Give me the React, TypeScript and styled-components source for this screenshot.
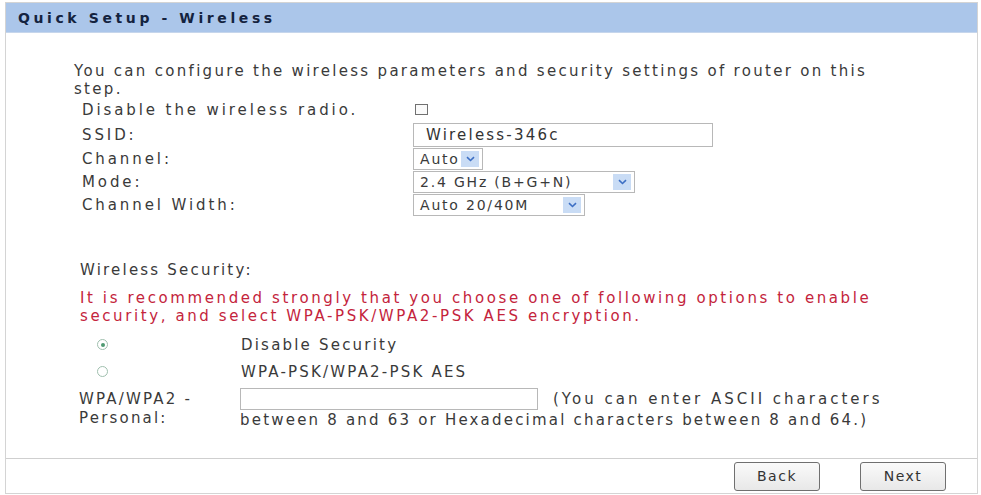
import { FC } from 'react'
import styled, { createGlobalStyle } from 'styled-components'

const GlobalStyle = createGlobalStyle`
  html, body {
    margin: 0;
    padding: 0;
    background: #fff;
  }
  body {
    font-family: "DejaVu Sans", Verdana, sans-serif;
    color: #3a3a3a;
  }
`

const Chevron: FC = () => (
  <svg width="9" height="6" viewBox="0 0 9 6">
    <path d="M1 1.2 L4.5 4.5 L8 1.2" fill="none" stroke="#3d6fc4" strokeWidth="1.6" />
  </svg>
)

const Select: FC<{ value: string; width: number }> = ({ value, width }) => (
  <StSelect style={{ width }}>
    <StSelectText>{value}</StSelectText>
    <StArrow>
      <Chevron />
    </StArrow>
  </StSelect>
)

const App: FC = () => {
  return (
    <>
      <GlobalStyle />
      <StFrame>
        <StHeader>Quick Setup - Wireless</StHeader>
        <StBody>
          <StIntro>
            You can configure the wireless parameters and security settings of router on this
            <br />
            step.
          </StIntro>
          <StForm>
            <StLabel $h={25}>Disable the wireless radio.</StLabel>
            <StCell $h={25}>
              <StCheckbox />
            </StCell>
            <StLabel $h={25}>SSID:</StLabel>
            <StCell $h={25}>
              <StInput $w={300}>Wireless-346c</StInput>
            </StCell>
            <StLabel $h={23}>Channel:</StLabel>
            <StCell $h={23}>
              <Select value="Auto" width={70} />
            </StCell>
            <StLabel $h={23}>Mode:</StLabel>
            <StCell $h={23}>
              <Select value="2.4 GHz (B+G+N)" width={222} />
            </StCell>
            <StLabel $h={23}>Channel Width:</StLabel>
            <StCell $h={23}>
              <Select value="Auto 20/40M" width={172} />
            </StCell>
          </StForm>

          <StSecurityTitle>Wireless Security:</StSecurityTitle>
          <StWarning>
            It is recommended strongly that you choose one of following options to enable
            <br />
            security, and select WPA-PSK/WPA2-PSK AES encryption.
          </StWarning>

          <StRadioList>
            <StRadioRow>
              <StRadioCell>
                <StRadio $checked />
              </StRadioCell>
              <span>Disable Security</span>
            </StRadioRow>
            <StRadioRow>
              <StRadioCell>
                <StRadio />
              </StRadioCell>
              <span>WPA-PSK/WPA2-PSK AES</span>
            </StRadioRow>
          </StRadioList>

          <StKeyRow>
            <StKeyLabel>
              WPA/WPA2 -<br />
              Personal:
            </StKeyLabel>
            <StKeyText>
              <StKeyLine>
                <StKeyInput />
                <StHint>(You can enter ASCII characters</StHint>
              </StKeyLine>
              <StKeyMore>between 8 and 63 or Hexadecimal characters between 8 and 64.)</StKeyMore>
            </StKeyText>
          </StKeyRow>
        </StBody>
        <StFooter>
          <StButton>Back</StButton>
          <StButton>Next</StButton>
        </StFooter>
      </StFrame>
    </>
  )
}

export default App

const StFrame = styled.div`
  margin: 2px 3px 0 5px;
  height: 492px;
  box-sizing: border-box;
  border: 1px solid #d4d4d4;
  display: flex;
  flex-direction: column;
`

const StHeader = styled.div`
  height: 29px;
  background: #abc6ea;
  border-bottom: 1px solid #c6d6ec;
  padding-left: 12px;
  display: flex;
  align-items: center;
  font-weight: bold;
  font-size: 14px;
  letter-spacing: 3.6px;
  color: #14233f;
`

const StBody = styled.div`
  flex: 1;
  padding: 29px 0 0 68px;
  font-size: 15px;
  letter-spacing: 2.2px;
`

const StIntro = styled.div`
  line-height: 18px;
  white-space: nowrap;
  letter-spacing: 2.3px;
  margin-bottom: -1px;
`

const StForm = styled.div`
  display: grid;
  grid-template-columns: 331px 1fr;
  margin-left: 8px;
`

const StLabel = styled.div<{ $h: number }>`
  height: ${(p) => p.$h}px;
  display: flex;
  align-items: center;
  white-space: nowrap;
  letter-spacing: 2.9px;
`

const StCell = styled.div<{ $h: number }>`
  height: ${(p) => p.$h}px;
  display: flex;
  align-items: center;
`

const StCheckbox = styled.span`
  display: block;
  width: 11px;
  height: 9px;
  margin-left: 2px;
  border: 1px solid #707070;
  background: #fafafa;
`

const StInput = styled.div<{ $w: number }>`
  width: ${(p) => p.$w}px;
  height: 24px;
  box-sizing: border-box;
  border: 1px solid #b8b8b8;
  padding-left: 12px;
  display: flex;
  align-items: center;
  color: #333;
`

const StSelect = styled.div`
  height: 22px;
  box-sizing: border-box;
  border: 1px solid #b8b8b8;
  display: flex;
  align-items: center;
  justify-content: space-between;
  padding: 0 3px 0 6px;
  font-size: 14px;
  letter-spacing: 1.8px;
`

const StSelectText = styled.span`
  white-space: nowrap;
`

const StArrow = styled.span`
  width: 18px;
  height: 16px;
  background: #c9dcf5;
  display: flex;
  align-items: center;
  justify-content: center;
`

const StSecurityTitle = styled.div`
  margin: 45px 0 0 6px;
  line-height: 18px;
`

const StWarning = styled.div`
  margin-top: 10px;
  margin-left: 6px;
  line-height: 18px;
  white-space: nowrap;
  letter-spacing: 2.6px;
  color: #c4243c;
`

const StRadioList = styled.div`
  margin-top: 6px;
`

const StRadioRow = styled.div`
  display: flex;
  align-items: center;
  height: 27px;
`

const StRadioCell = styled.div`
  width: 167px;
  padding-left: 23px;
  box-sizing: border-box;
`

const StRadio = styled.span<{ $checked?: boolean }>`
  display: block;
  width: 9px;
  height: 9px;
  border-radius: 50%;
  border: 1px solid #9fbfae;
  position: relative;
  &::after {
    content: '';
    display: ${(p) => (p.$checked ? 'block' : 'none')};
    position: absolute;
    left: 2.5px;
    top: 2.5px;
    width: 4px;
    height: 4px;
    border-radius: 50%;
    background: #4f9a72;
  }
`

const StKeyRow = styled.div`
  display: flex;
  margin-top: 3px;
  margin-left: 5px;
  line-height: 19px;
`

const StKeyLabel = styled.div`
  width: 161px;
  padding-top: 2px;
  white-space: nowrap;
`

const StKeyText = styled.div`
  white-space: nowrap;
`

const StKeyLine = styled.div`
  display: flex;
  align-items: center;
  gap: 15px;
  height: 22px;
`

const StKeyInput = styled.span`
  display: block;
  width: 298px;
  height: 22px;
  box-sizing: border-box;
  border: 1px solid #b8b8b8;
`

const StHint = styled.span`
  letter-spacing: 3px;
`

const StKeyMore = styled.div`
  margin-top: 1px;
`

const StFooter = styled.div`
  height: 34px;
  border-top: 1px solid #cfcfcf;
  display: flex;
  justify-content: flex-end;
  align-items: center;
  gap: 40px;
  padding-right: 31px;
`

const StButton = styled.button`
  width: 86px;
  height: 29px;
  border: 1px solid #707070;
  border-radius: 3px;
  background: linear-gradient(#fafafa, #e8e8e8);
  font-family: "DejaVu Sans", Verdana, sans-serif;
  font-size: 14px;
  letter-spacing: 1.5px;
  color: #333;
  padding: 0;
`
